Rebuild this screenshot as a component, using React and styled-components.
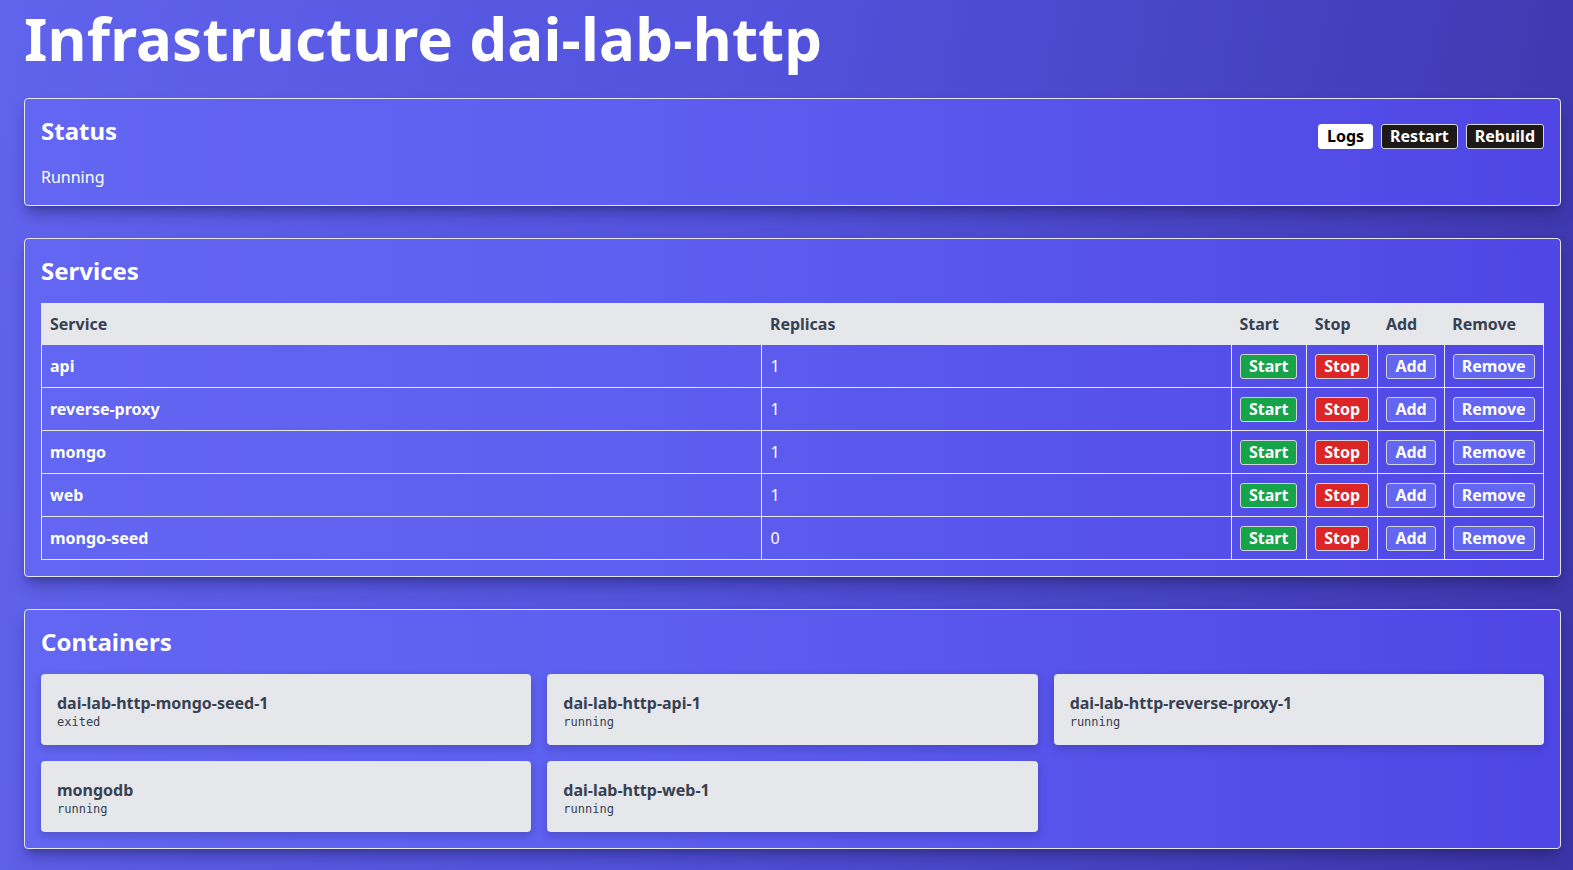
import React from 'react';
import styled, { createGlobalStyle } from 'styled-components';

const GlobalStyle = createGlobalStyle`
  html, body {
    margin: 0;
    padding: 0;
  }
  body {
    font-family: "Noto Sans", "Open Sans", sans-serif;
    color: #fff;
    background: linear-gradient(100deg, #6063ec 0%, #5252dc 45%, #3c35a9 100%);
    min-height: 100vh;
    overflow: hidden;
  }
`;

const Page = styled.div`
  padding: 0 12px 0 24px;
  box-sizing: border-box;
`;

const Title = styled.h1`
  margin: 0;
  padding: 2px 0 0 0;
  font-size: 60px;
  line-height: 72px;
  font-weight: 700;
  letter-spacing: 0.2px;
`;

const Stack = styled.div`
  display: flex;
  flex-direction: column;
  gap: 32px;
  margin-top: 24px;
`;

const Panel = styled.section`
  border: 1px solid #e5e7eb;
  border-radius: 4px;
  padding: 16px;
  background: linear-gradient(90deg, #6366f1 0%, #5d5ff0 40%, #4f46e5 100%);
  box-shadow: 0 10px 15px -3px rgba(30, 27, 90, 0.45), 0 4px 6px -4px rgba(30, 27, 90, 0.4);
`;

const PanelHeader = styled.div`
  display: flex;
  justify-content: space-between;
  align-items: flex-start;
  margin-bottom: ${p => p.$gap || 16}px;
`;

const Heading = styled.h2`
  margin: 0;
  font-size: 24px;
  line-height: 32px;
  font-weight: 700;
`;

const Toolbar = styled.div`
  display: flex;
  gap: 8px;
  margin-top: 9px;
`;

const ToolButton = styled.button`
  font-family: inherit;
  font-size: 16px;
  font-weight: 700;
  line-height: 23px;
  padding: 0 8px;
  border-radius: 3px;
  border: 1px solid ${p => (p.$light ? '#ffffff' : '#d1d5db')};
  background: ${p => (p.$light ? '#ffffff' : '#1c1917')};
  color: ${p => (p.$light ? '#000000' : '#ffffff')};
  cursor: pointer;
`;

const StatusText = styled.p`
  margin: 0;
  font-size: 16px;
  line-height: 24px;
`;

const Table = styled.table`
  width: 100%;
  border-collapse: collapse;
  table-layout: fixed;
  border: 1px solid #e5e7eb;
`;

const HeadCell = styled.th`
  background: #e5e7eb;
  color: #374151;
  text-align: left;
  font-size: 16px;
  font-weight: 700;
  line-height: 24px;
  padding: 8px;
`;

const Cell = styled.td`
  border: 1px solid #e5e7eb;
  padding: 0 8px;
  height: 42px;
  font-size: 16px;
  line-height: 24px;
  font-weight: ${p => (p.$bold ? 700 : 400)};
  vertical-align: middle;
`;

const tones = {
  start: '#16a34a',
  stop: '#dc2626',
  neutral: '#6366f1',
};

const RowButton = styled.button`
  font-family: inherit;
  font-size: 16px;
  font-weight: 700;
  line-height: 23px;
  padding: 0 8px;
  border-radius: 3px;
  border: 1px solid #d1d5db;
  background: ${p => tones[p.$tone]};
  color: #fff;
  display: block;
  cursor: pointer;
`;

const Grid = styled.div`
  display: grid;
  grid-template-columns: repeat(3, 1fr);
  gap: 16px;
`;

const ContainerCard = styled.div`
  background: #e5e7eb;
  border-radius: 4px;
  padding: 17px 16px 16px;
  height: 71px;
  box-sizing: border-box;
  box-shadow: 0 4px 8px rgba(30, 27, 90, 0.25);
  color: #374151;
`;

const ContainerName = styled.div`
  font-size: 16px;
  font-weight: 700;
  line-height: 24px;
`;

const ContainerState = styled.div`
  font-family: "DejaVu Sans Mono", "Liberation Mono", monospace;
  font-size: 12px;
  line-height: 14px;
`;

const services = [
  { name: 'api', replicas: 1 },
  { name: 'reverse-proxy', replicas: 1 },
  { name: 'mongo', replicas: 1 },
  { name: 'web', replicas: 1 },
  { name: 'mongo-seed', replicas: 0 },
];

const containers = [
  { name: 'dai-lab-http-mongo-seed-1', state: 'exited' },
  { name: 'dai-lab-http-api-1', state: 'running' },
  { name: 'dai-lab-http-reverse-proxy-1', state: 'running' },
  { name: 'mongodb', state: 'running' },
  { name: 'dai-lab-http-web-1', state: 'running' },
];

export default function App() {
  return (
    <Page>
      <GlobalStyle />
      <Title>Infrastructure dai-lab-http</Title>
      <Stack>
        <Panel>
          <PanelHeader $gap={16}>
            <Heading>Status</Heading>
            <Toolbar>
              <ToolButton $light>Logs</ToolButton>
              <ToolButton>Restart</ToolButton>
              <ToolButton>Rebuild</ToolButton>
            </Toolbar>
          </PanelHeader>
          <StatusText>Running</StatusText>
        </Panel>

        <Panel>
          <PanelHeader>
            <Heading>Services</Heading>
          </PanelHeader>
          <Table>
            <colgroup>
              <col style={{ width: 718 }} />
              <col style={{ width: 468 }} />
              <col style={{ width: 75 }} />
              <col style={{ width: 71 }} />
              <col style={{ width: 66 }} />
              <col style={{ width: 99 }} />
            </colgroup>
            <thead>
              <tr>
                <HeadCell>Service</HeadCell>
                <HeadCell>Replicas</HeadCell>
                <HeadCell>Start</HeadCell>
                <HeadCell>Stop</HeadCell>
                <HeadCell>Add</HeadCell>
                <HeadCell>Remove</HeadCell>
              </tr>
            </thead>
            <tbody>
              {services.map(s => (
                <tr key={s.name}>
                  <Cell $bold>{s.name}</Cell>
                  <Cell>{s.replicas}</Cell>
                  <Cell><RowButton $tone="start">Start</RowButton></Cell>
                  <Cell><RowButton $tone="stop">Stop</RowButton></Cell>
                  <Cell><RowButton $tone="neutral">Add</RowButton></Cell>
                  <Cell><RowButton $tone="neutral">Remove</RowButton></Cell>
                </tr>
              ))}
            </tbody>
          </Table>
        </Panel>

        <Panel>
          <PanelHeader>
            <Heading>Containers</Heading>
          </PanelHeader>
          <Grid>
            {containers.map(c => (
              <ContainerCard key={c.name}>
                <ContainerName>{c.name}</ContainerName>
                <ContainerState>{c.state}</ContainerState>
              </ContainerCard>
            ))}
          </Grid>
        </Panel>
      </Stack>
    </Page>
  );
}
